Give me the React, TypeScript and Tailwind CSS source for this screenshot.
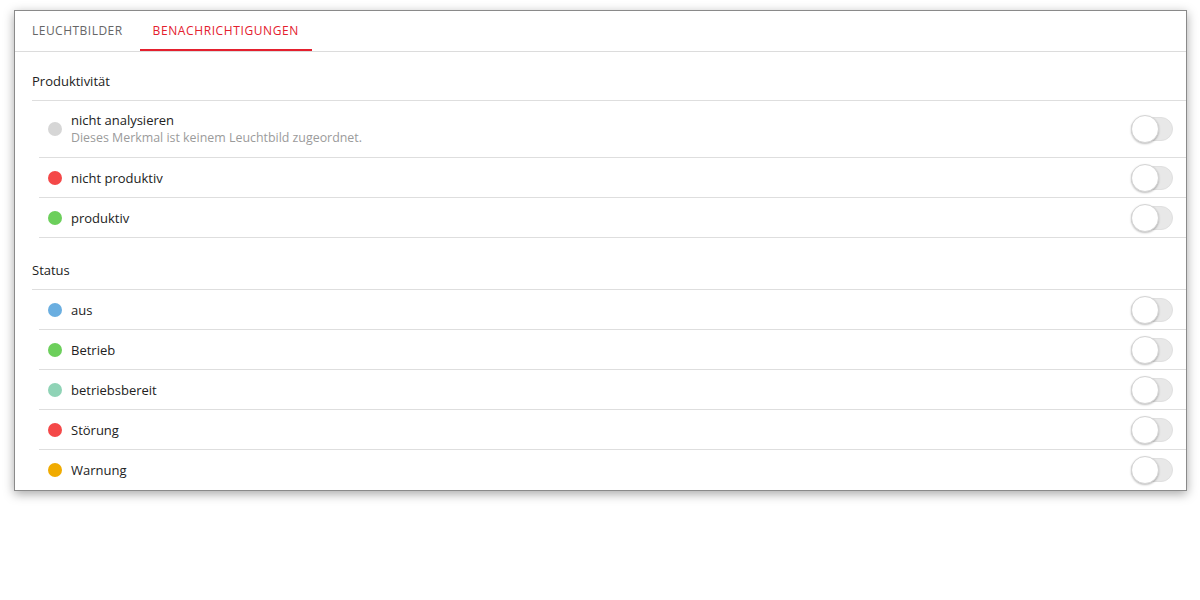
import React from 'react';

type Item = { label: string; color: string; hint?: string };

const sections: { title: string; items: Item[] }[] = [
    {
        title: 'Produktivität',
        items: [
            { label: 'nicht analysieren', color: 'bg-[#d6d6d6]', hint: 'Dieses Merkmal ist keinem Leuchtbild zugeordnet.' },
            { label: 'nicht produktiv', color: 'bg-[#f44848]' },
            { label: 'produktiv', color: 'bg-[#6ccf5b]' },
        ],
    },
    {
        title: 'Status',
        items: [
            { label: 'aus', color: 'bg-[#6aaee0]' },
            { label: 'Betrieb', color: 'bg-[#6ccf5b]' },
            { label: 'betriebsbereit', color: 'bg-[#8fd3b6]' },
            { label: 'Störung', color: 'bg-[#f44848]' },
            { label: 'Warnung', color: 'bg-[#f0ab00]' },
        ],
    },
];

function Toggle() {
    return (
        <div className="relative w-[42px] h-[28px] shrink-0">
            <div className="absolute left-0 right-0 top-[2px] h-[24px] rounded-full bg-[#e8e8e8] border border-[#e0e0e0]" />
            <div className="absolute left-0 top-0 w-[28px] h-[28px] rounded-full bg-white border border-[#d4d4d4] shadow-[0_1px_2px_rgba(0,0,0,0.25)]" />
        </div>
    );
}

function Row({ item, last }: { item: Item; last: boolean }) {
    return (
        <div className={`ml-[7px] pl-[9px] pr-[13px] flex items-center justify-between ${item.hint ? 'h-[57px]' : 'h-[40px]'} ${last ? '' : 'border-b border-[#dedede]'}`}>
            <div className="flex items-center">
                <span className={`w-[14px] h-[14px] rounded-full ${item.color}`} />
                <div className="ml-[9px]">
                    <div className="text-[13px] leading-[18px] text-[#222]">{item.label}</div>
                    {item.hint && (
                        <div className="text-[12.4px] leading-[18px] text-[#9b9b9b]">{item.hint}</div>
                    )}
                </div>
            </div>
            <Toggle />
        </div>
    );
}

export default function App() {
    return (
        <div className="w-[1200px] h-[600px] bg-white font-['Open_Sans',sans-serif]">
            <div className="pl-[14px] pt-[10px]">
                <div className="w-[1173px] border border-[#8a8a8a] bg-white shadow-[0_3px_10px_rgba(0,0,0,0.35)] overflow-hidden">
                    {/* Tabs */}
                    <div className="h-[41px] flex border-b border-[#dcdcdc]">
                        <button className="px-[17px] h-full text-[12px] tracking-[0.04em] font-medium text-[#666]">
                            LEUCHTBILDER
                        </button>
                        <button className="relative px-[13px] h-full text-[12px] tracking-[0.05em] font-medium text-[#e4202e]">
                            BENACHRICHTIGUNGEN
                            <span className="absolute left-0 right-0 bottom-0 h-[2px] bg-[#e4202e]" />
                        </button>
                    </div>

                    {/* Sections */}
                    <div className="pl-[17px]">
                        {sections.map((section, si) => (
                            <div key={section.title}>
                                <div className={`${si === 0 ? 'pt-[20px]' : 'pt-[23px]'} pb-[10px] text-[13px] leading-[18px] text-[#222] border-b border-[#dedede]`}>
                                    {section.title}
                                </div>
                                {section.items.map((item, i) => (
                                    <Row
                                        key={item.label}
                                        item={item}
                                        last={si === sections.length - 1 && i === section.items.length - 1}
                                    />
                                ))}
                            </div>
                        ))}
                    </div>
                </div>
            </div>
        </div>
    );
}
